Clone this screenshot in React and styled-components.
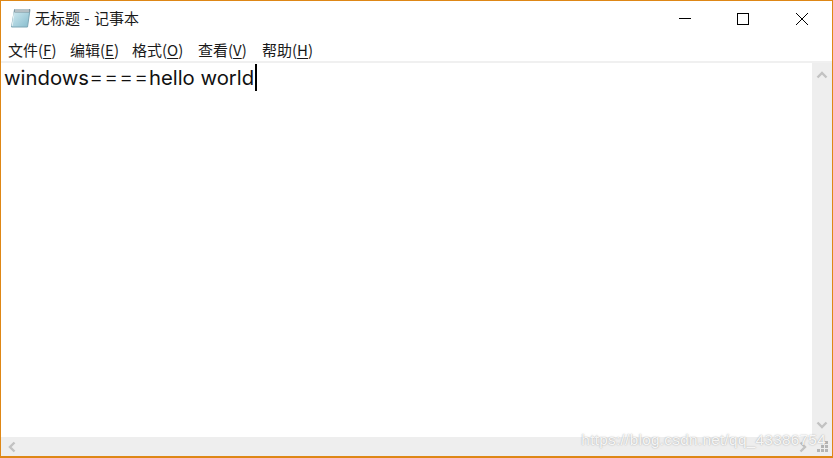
import React from 'react'
import styled, { createGlobalStyle } from 'styled-components';

const GlobalStyle = createGlobalStyle`
  html, body {
    margin: 0;
    padding: 0;
    background: #fff;
  }
`;

const Window = styled.div`
  position: relative;
  box-sizing: border-box;
  width: 833px;
  height: 458px;
  display: flex;
  flex-direction: column;
  overflow: hidden;
  background: #fff;
  border: 1px solid #de8716;
  border-bottom-width: 2px;
  font-family: "Noto Sans CJK SC", "Liberation Sans", sans-serif;
  color: #000;
`;

const TitleBar = styled.div`
  height: 34px;
  flex: none;
  display: flex;
  align-items: center;
  padding-left: 10px;
`;

const TitleText = styled.span`
  margin-left: 4px;
  font-size: 15px;
  line-height: 20px;
  flex: 1;
  word-spacing: 1px;
  color: #1a1a1a;
`;

const WindowButton = styled.div`
  width: ${props => props.width}px;
  height: 30px;
  flex: none;
  display: flex;
  align-items: center;
  justify-content: center;
  margin-top: 2px;
`;

const MenuBar = styled.div`
  height: 20px;
  flex: none;
  display: flex;
  align-items: center;
  padding: 5px 0 1px 7px;
  border-bottom: 2px solid #f0f0f0;
`;

const MenuItem = styled.span`
  font-size: 15px;
  line-height: 20px;
  width: ${props => props.width}px;
  white-space: nowrap;
  color: #1a1a1a;

  u {
    text-underline-offset: 2px;
  }
`;

const Middle = styled.div`
  flex: 1;
  min-height: 0;
  display: flex;
`;

const Editor = styled.div`
  flex: 1;
  padding: 1px 0 0 3px;
  font-family: "Inter", "Liberation Sans", sans-serif;
  font-size: 20.3px;
  line-height: 27px;
  white-space: pre;
  display: flex;
  align-items: flex-start;
  color: #111;
`;

const Equals = styled.span`
  font-size: 22px;
  letter-spacing: 0.6px;
  font-weight: 300;
`;

const Caret = styled.span`
  display: inline-block;
  width: 2px;
  height: 27px;
  background: #000;
  margin-left: 1px;
`;

const VScroll = styled.div`
  width: 20px;
  flex: none;
  background: #eeeeee;
  display: flex;
  flex-direction: column;
  justify-content: space-between;
  align-items: center;
  padding: 6px 0 6px;
  box-sizing: border-box;
`;

const BottomRow = styled.div`
  height: 19px;
  flex: none;
  display: flex;
  align-items: center;
  justify-content: space-between;
  background: #eeeeee;
  padding: 0 3px 0 5px;
`;

const BottomRight = styled.div`
  display: flex;
  align-items: center;
  gap: 8px;
`;

const Watermark = styled.span`
  position: absolute;
  right: 6px;
  bottom: 7px;
  font-family: "Liberation Sans", sans-serif;
  font-size: 15.3px;
  line-height: 18px;
  letter-spacing: 0.3px;
  color: rgba(255, 255, 255, 0.9);
  text-shadow: 0 0 1.5px rgba(120, 120, 120, 0.75);
`;

const NotepadIcon = () => (
  <svg width="20" height="20" viewBox="0 0 20 20">
    <defs>
      <linearGradient id="page" x1="0" y1="0" x2="1" y2="1">
        <stop offset="0" stopColor="#d5ecf2" />
        <stop offset="1" stopColor="#86bccd" />
      </linearGradient>
    </defs>
    <path d="M3.5 1.5 L19 1.5 L16.5 19 L0.5 19 Z" fill="url(#page)" stroke="#7ea6b5" strokeWidth="1" />
    <path d="M3.5 1.5 L19 1.5 L18.6 4.5 L3.2 4.5 Z" fill="#7f8f98" />
    <path d="M5 1 v3 M7 1 v3 M9 1 v3 M11 1 v3 M13 1 v3 M15 1 v3 M17 1 v3" stroke="#eceff0" strokeWidth="1" />
    <path d="M3.2 4.5 L1.2 18" fill="none" stroke="#e4f2f5" strokeWidth="1" />
  </svg>
);

const Arrow = ({ d }) => (
  <svg width="12" height="12" viewBox="0 0 12 12">
    <path d={d} fill="none" stroke="#c2c2c2" strokeWidth="2.4" />
  </svg>
);

const Grip = () => (
  <svg width="12" height="12" viewBox="0 0 12 12" fill="#b4b4b4">
    <rect x="8" y="0" width="3" height="3" />
    <rect x="4" y="4" width="3" height="3" />
    <rect x="8" y="4" width="3" height="3" />
    <rect x="0" y="8" width="3" height="3" />
    <rect x="4" y="8" width="3" height="3" />
    <rect x="8" y="8" width="3" height="3" />
  </svg>
);

const menus = [
  { label: '文件', key: 'F', width: 62 },
  { label: '编辑', key: 'E', width: 62 },
  { label: '格式', key: 'O', width: 66 },
  { label: '查看', key: 'V', width: 64 },
  { label: '帮助', key: 'H', width: 60 },
];

export default function App() {
  return (
    <Window>
      <GlobalStyle />
      <TitleBar>
        <NotepadIcon />
        <TitleText>无标题 - 记事本</TitleText>
        <WindowButton width={58}>
          <svg width="12" height="12" viewBox="0 0 12 12">
            <path d="M0 5.5 H12" stroke="#000" strokeWidth="1" />
          </svg>
        </WindowButton>
        <WindowButton width={58}>
          <svg width="12" height="12" viewBox="0 0 12 12">
            <rect x="0.5" y="0.5" width="11" height="11" fill="none" stroke="#000" strokeWidth="1" />
          </svg>
        </WindowButton>
        <WindowButton width={60}>
          <svg width="12" height="12" viewBox="0 0 12 12">
            <path d="M0 0 L12 12 M12 0 L0 12" stroke="#000" strokeWidth="1" />
          </svg>
        </WindowButton>
      </TitleBar>
      <MenuBar>
        {menus.map(m => (
          <MenuItem key={m.key} width={m.width}>
            {m.label}(<u>{m.key}</u>)
          </MenuItem>
        ))}
      </MenuBar>
      <Middle>
        <Editor>
          <span>windows<Equals>====</Equals>hello world</span><Caret />
        </Editor>
        <VScroll>
          <Arrow d="M1.5 8.5 L6 4 L10.5 8.5" />
          <Arrow d="M1.5 3.5 L6 8 L10.5 3.5" />
        </VScroll>
      </Middle>
      <BottomRow>
        <Arrow d="M8.5 1.5 L4 6 L8.5 10.5" />
        <BottomRight>
          <Arrow d="M3.5 1.5 L8 6 L3.5 10.5" />
          <Grip />
        </BottomRight>
      </BottomRow>
      <Watermark>https://blog.csdn.net/qq_43386754</Watermark>
    </Window>
  )
}
